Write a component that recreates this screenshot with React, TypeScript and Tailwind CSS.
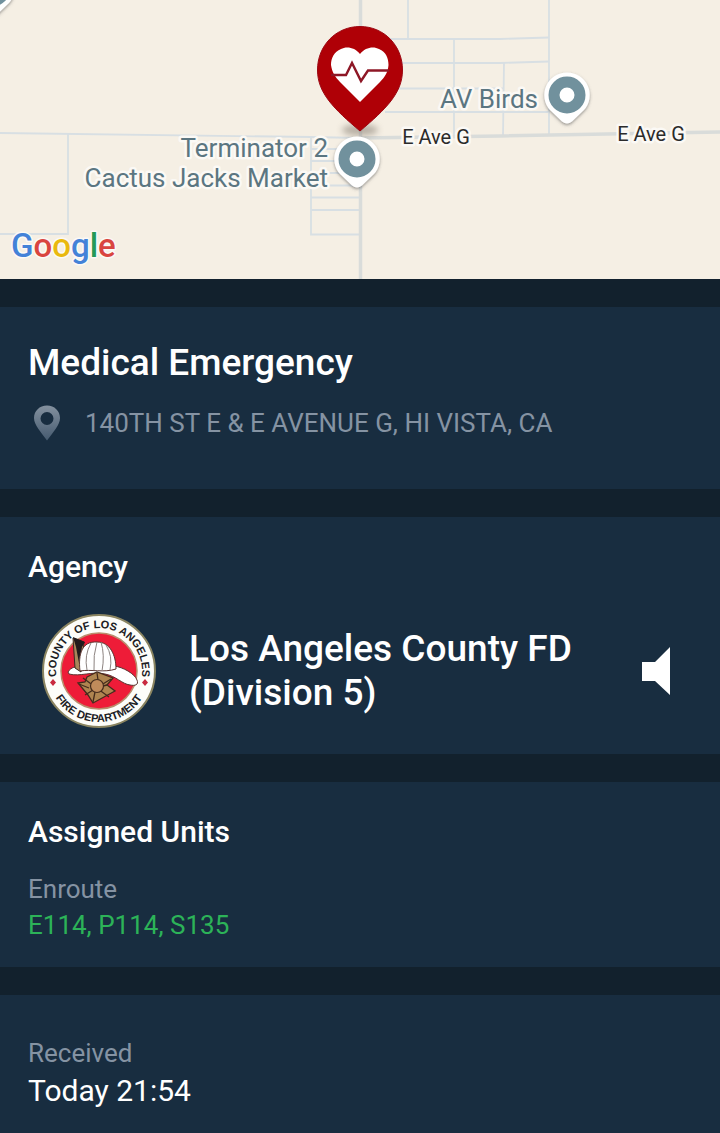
import type { ReactNode } from 'react';

const incident = {
  title: 'Medical Emergency',
  address: '140TH ST E & E AVENUE G, HI VISTA, CA',
  agency: 'Los Angeles County FD (Division 5)',
  status: 'Enroute',
  units: ['E114', 'P114', 'S135'],
  received: 'Today 21:54',
};

const minorRoads = [
  'M0 133 L311 137 L360 138',
  'M68 134 V234 H0',
  'M408 0 V39',
  'M378 39 H500 L549 37.5',
  'M549 0 V136',
  'M390 63 H500 L549 61.5',
  'M390 88.5 H503',
  'M385 112 H549',
  'M454 39 V136',
  'M504 63 L503 136',
  'M311 137 V234.5 H360',
  'M311 149 H360',
  'M311 161 H360',
  'M311 173 H360',
  'M311 185.5 H360',
  'M311 197.5 H360',
  'M311 210 H360',
];

function PlacePin({ x, y }: { x: number; y: number }) {
  return (
    <g transform={`translate(${x} ${y})`}>
      <path
        d="M0 -22.5 A22.5 22.5 0 0 1 17 15 L5 26.5 Q0 30.5 -5 26.5 L-17 15 A22.5 22.5 0 0 1 0 -22.5 Z"
        fill="#fff"
        filter="url(#pinShadow)"
      />
      <circle r="13" fill="none" stroke="#71919d" strokeWidth="11" />
    </g>
  );
}

function IncidentPin() {
  return (
    <g>
      <ellipse cx="360" cy="130" rx="18" ry="6" fill="#7d7367" opacity="0.5" filter="url(#groundShadow)" />
      <path
        d="M360 26.5 C336 26.5 317.5 45.5 317.5 70 C317.5 93 334 109 360 131 C386 109 402.5 93 402.5 70 C402.5 45.5 384 26.5 360 26.5 Z"
        fill="#af0006"
        stroke="#9c0712"
      />
      <path
        d="M360 54 C355 47 346 46 341 49 C334 52 331 58 331 65 C332 72 335 77 340 82 L360 102 L380 82 C385 77 388 72 388.5 65 C388.5 58 386 52 379 49 C374 46 365 47 360 54 Z"
        fill="#fff"
      />
      <path d="M331 75 H346 L352 63 L361 81 L368 70.5 H389" fill="none" stroke="#8e1726" strokeWidth="2.4" />
    </g>
  );
}

function Map() {
  return (
    <div className="h-[279px] w-full overflow-hidden bg-[#f5efe4]">
      <svg
        viewBox="0 0 720 279"
        preserveAspectRatio="xMidYMid slice"
        className="h-full w-full"
        role="img"
        aria-label="Incident map"
      >
        <defs>
          <filter id="pinShadow" x="-30%" y="-30%" width="160%" height="160%">
            <feDropShadow dx="0" dy="1.5" stdDeviation="1.5" floodColor="#555" floodOpacity="0.6" />
          </filter>
          <filter id="groundShadow" x="-50%" y="-100%" width="200%" height="300%">
            <feGaussianBlur stdDeviation="3" />
          </filter>
        </defs>

        <g fill="none" stroke="#d8dfe3" strokeWidth="1.8">
          {minorRoads.map((d) => (
            <path key={d} d={d} />
          ))}
        </g>
        <path d="M360 138 L500 136 L720 132" fill="none" stroke="#d9dcda" strokeWidth="3.5" />
        <path d="M360.5 0 V279" fill="none" stroke="#d9dcda" strokeWidth="3.5" />

        <PlacePin x={-8} y={-12} />
        <PlacePin x={567} y={95} />
        <IncidentPin />
        <PlacePin x={357} y={159} />

        <g
          className="font-['Roboto',sans-serif] text-[26px]"
          fill="#5b7681"
          stroke="#fbf9f5"
          strokeWidth="5"
          strokeLinejoin="round"
          paintOrder="stroke"
          textAnchor="end"
        >
          <text x="538" y="108">AV Birds</text>
          <text x="328" y="157">Terminator 2</text>
          <text x="328" y="187">Cactus Jacks Market</text>
        </g>
        <g
          className="font-['Roboto',sans-serif] text-[20px]"
          fill="#2b2b2b"
          stroke="#fbf9f5"
          strokeWidth="5"
          strokeLinejoin="round"
          paintOrder="stroke"
          textAnchor="middle"
        >
          <text x="436" y="144">E Ave G</text>
          <text x="651" y="141">E Ave G</text>
        </g>
        <text
          x="11"
          y="257"
          className="font-['Roboto',sans-serif] text-[33px] font-medium"
          stroke="#fbf9f5"
          strokeWidth="3"
          strokeLinejoin="round"
          paintOrder="stroke"
        >
          <tspan fill="#4382d8">G</tspan>
          <tspan fill="#d9453f">o</tspan>
          <tspan fill="#e9b90f">o</tspan>
          <tspan fill="#4382d8">g</tspan>
          <tspan fill="#249a57">l</tspan>
          <tspan fill="#d9453f">e</tspan>
        </text>
      </svg>
    </div>
  );
}

function AgencySeal() {
  return (
    <svg viewBox="0 0 116 116" className="size-[116px] shrink-0" role="img" aria-label="County of Los Angeles Fire Department">
      <defs>
        <path id="sealTop" d="M17 71 A43 43 0 1 1 99 71" />
        <path id="sealBottom" d="M7 58 A51 51 0 0 0 109 58" />
      </defs>
      <circle cx="58" cy="58" r="56" fill="#fdfdf9" stroke="#8b8561" strokeWidth="2" />
      <circle cx="58" cy="58" r="38" fill="#ee1c38" stroke="#b98d6c" strokeWidth="1.5" />
      <g className="font-['Liberation_Sans',sans-serif] text-[11px] font-bold" fill="#1c2023" textAnchor="middle">
        <text>
          <textPath href="#sealTop" startOffset="50%">COUNTY OF LOS ANGELES</textPath>
        </text>
        <text>
          <textPath href="#sealBottom" startOffset="50%">FIRE DEPARTMENT</textPath>
        </text>
      </g>
      <path d="M12 66 l3 3.5 l-3 3.5 l-3 -3.5 Z M104 66 l3 3.5 l-3 3.5 l-3 -3.5 Z" fill="#c92a3f" />
      {/* helmet */}
      <path
        d="M27 59 C30 54 35 53 40 55 L73 53 C82 54 94 61 96 67 C98 72 94 73 89 72 C81 71 75 63 64 61 C51 58 39 64 28 61 Z"
        fill="#fff"
        stroke="#5b3430"
      />
      <path d="M32 25 L43 29 L40 59 L34 55 Z" fill="#a9875a" stroke="#3b2a22" />
      <path d="M32 24 L44 29 L41 34 L38 50 L35 34 Z" fill="#211b1c" />
      <path
        d="M39 58 C37 41 41 28 56 29 C69 29 75 42 75 56 C63 60 50 56 39 58 Z"
        fill="#fff"
        stroke="#5b3430"
      />
      <path d="M50 30 Q43 42 46 57 M56 29 Q52 42 53 57 M60 29 Q64 42 61 58 M65 32 Q72 43 69 57" fill="none" stroke="#8c8380" />
      {/* maltese badge */}
      <path d="M46 64 L56 59 L72 65 L66 72 L74 78 L52 90 L47 82 L37 70 L44 69 Z" fill="#af8550" stroke="#442b1c" strokeWidth="1.3" />
      <path d="M42 65 L68 84 M70 66 L44 82 M38 71 L48 75 M66 72 L58 74 M52 89 L54 79 M56 60 L57 67" fill="none" stroke="#442b1c" strokeWidth="1.3" />
      <circle cx="56" cy="73" r="6.5" fill="#c08b5b" stroke="#442b1c" strokeWidth="1.2" />
    </svg>
  );
}

function PinIcon() {
  return (
    <svg viewBox="0 0 28 36" className="h-9 w-7 shrink-0" aria-hidden="true">
      <defs>
        <linearGradient id="pinFill" x1="0" y1="0" x2="0" y2="1">
          <stop offset="0" stopColor="#84919f" />
          <stop offset="1" stopColor="#455a6f" />
        </linearGradient>
      </defs>
      <path
        d="M14 0.5 C6.5 0.5 1 6 1 13 C1 20 8 27 14 35.5 C20 27 27 20 27 13 C27 6 21.5 0.5 14 0.5 Z M14 7 A6.5 6.5 0 1 1 14 20 A6.5 6.5 0 1 1 14 7 Z"
        fill="url(#pinFill)"
        fillRule="evenodd"
      />
    </svg>
  );
}

function Section({ children, className }: { children: ReactNode; className: string }) {
  return <section className={`bg-[#182d40] px-7 ${className}`}>{children}</section>;
}

export default function App() {
  return (
    <main className="flex min-h-screen flex-col bg-[#182d40] font-['Roboto',sans-serif] text-white">
      <Map />
      <div className="flex flex-col gap-7 bg-[#12212d] pt-7">
        <Section className="pt-8 pb-12">
          <h1 className="text-[37px] leading-[48px] font-medium">{incident.title}</h1>
          <div className="mt-[18px] flex items-center gap-6 pl-[5px]">
            <PinIcon />
            <p className="text-[26px] leading-9 text-[#8593a3]">{incident.address}</p>
          </div>
        </Section>

        <Section className="pt-8 pb-[25px]">
          <h2 className="text-[30px] leading-9 font-medium">Agency</h2>
          <div className="mt-7 flex items-center pr-3 pl-[13px]">
            <AgencySeal />
            <p className="ml-8 max-w-[400px] flex-1 text-[37px] leading-11 font-medium">{incident.agency}</p>
            <button type="button" aria-label="Listen" className="ml-auto flex h-12 w-12 items-center justify-center">
              <svg viewBox="0 0 28 48" className="h-12 w-7">
                <path d="M0 15 H13 L28 0 V48 L13 34 H0 Z" fill="#fff" />
              </svg>
            </button>
          </div>
        </Section>

        <Section className="pt-8 pb-6">
          <h2 className="text-[30px] leading-9 font-medium">Assigned Units</h2>
          <p className="mt-[21px] text-[26px] leading-9 text-[#8593a3]">{incident.status}</p>
          <p className="text-[26px] leading-9 text-[#2cb358]">{incident.units.join(', ')}</p>
        </Section>

        <Section className="pt-10 pb-6">
          <p className="text-[26px] leading-9 text-[#8593a3]">Received</p>
          <p className="text-[30px] leading-10">{incident.received}</p>
        </Section>
      </div>
    </main>
  );
}
